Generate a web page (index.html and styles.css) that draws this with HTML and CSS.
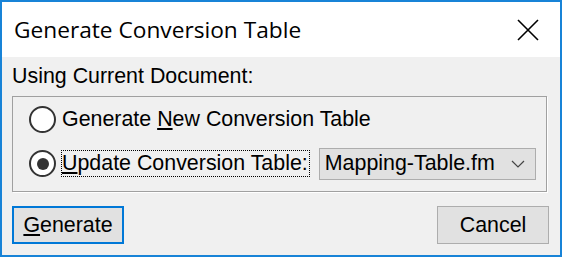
FILE: index.html
```html
<!DOCTYPE html>
<html lang="en">
<head>
    <meta charset="UTF-8">
    <title>Generate Conversion Table</title>
    <link rel="stylesheet" href="styles.css">
</head>
<body>
    <div class="dialog">
        <div class="titlebar">
            <span class="title">Generate Conversion Table</span>
            <svg class="close" width="22" height="22" viewBox="0 0 22 22">
                <path d="M1 1 L21 21 M21 1 L1 21" stroke="#000" stroke-width="1.6" fill="none"/>
            </svg>
        </div>
        <div class="content">
            <div class="label">Using Current Document:</div>
            <div class="group">
                <div class="row">
                    <span class="radio"></span>
                    <span class="text">Generate <u>N</u>ew Conversion Table</span>
                </div>
                <div class="row">
                    <span class="radio checked"></span>
                    <span class="text focus"><u>U</u>pdate Conversion Table:</span>
                    <div class="select">
                        <span>Mapping-Table.fm</span>
                        <svg width="14" height="8" viewBox="0 0 14 8">
                            <path d="M1 1 L7 7 L13 1" stroke="#444" stroke-width="1.2" fill="none"/>
                        </svg>
                    </div>
                </div>
            </div>
            <div class="buttons">
                <button class="btn default"><u>G</u>enerate</button>
                <button class="btn">Cancel</button>
            </div>
        </div>
    </div>
</body>
</html>
```

FILE: styles.css
```css
body {
    margin: 0;
    background: #f0f0f0;
}

.dialog {
    width: 562px;
    height: 257px;
    box-sizing: border-box;
    border: 2px solid #1883d7;
    display: flex;
    flex-direction: column;
    font-family: "Liberation Sans", Arial, sans-serif;
    font-size: 21.4px;
    color: #000;
}

.titlebar {
    height: 55px;
    background: #fff;
    display: flex;
    align-items: center;
    justify-content: space-between;
    padding: 0 21px 0 12px;
}

.title {
    font-family: "Open Sans", "Noto Sans", sans-serif;
    font-size: 22.7px;
}

.close {
    display: block;
}

.content {
    flex: 1;
    background: #f0f0f0;
    padding: 7px 11px 0 10px;
}

.label {
    line-height: 24px;
}

.group {
    margin-top: 8px;
    margin-right: 2px;
    height: 96px;
    box-sizing: border-box;
    border: 1px solid #a0a0a0;
    box-shadow: 1px 1px 0 #fff;
    display: flex;
    flex-direction: column;
    padding: 9px 0 0 16px;
    gap: 17px;
}

.row {
    display: flex;
    align-items: center;
    height: 27px;
}

.radio {
    width: 27px;
    height: 27px;
    box-sizing: border-box;
    border: 2px solid #333;
    border-radius: 50%;
    background: #fff;
    display: flex;
    align-items: center;
    justify-content: center;
    flex-shrink: 0;
}

.radio.checked::after {
    content: "";
    width: 12px;
    height: 12px;
    border-radius: 50%;
    background: #333;
}

.text {
    margin-left: 5px;
    line-height: 25px;
    padding: 0 1px 0 0;
    border: 1px dotted transparent;
    white-space: nowrap;
}

.text.focus {
    border-color: #000;
}

.text u {
    text-underline-offset: 2px;
}

.select {
    margin-left: 9px;
    width: 217px;
    height: 32px;
    flex-shrink: 0;
    box-sizing: border-box;
    border: 1px solid #adadad;
    background: #e1e1e1;
    display: flex;
    align-items: center;
    justify-content: space-between;
    padding: 0 10px 0 5px;
}

.select svg {
    display: block;
}

.buttons {
    display: flex;
    justify-content: space-between;
    margin-top: 14px;
}

.btn {
    width: 112px;
    height: 38px;
    box-sizing: border-box;
    border: 1px solid #adadad;
    background: #e1e1e1;
    font-family: "Liberation Sans", Arial, sans-serif;
    font-size: 21.4px;
    color: #000;
    padding: 0;
}

.btn.default {
    border: 2px solid #0078d7;
}

.btn u {
    text-underline-offset: 2px;
}
```
